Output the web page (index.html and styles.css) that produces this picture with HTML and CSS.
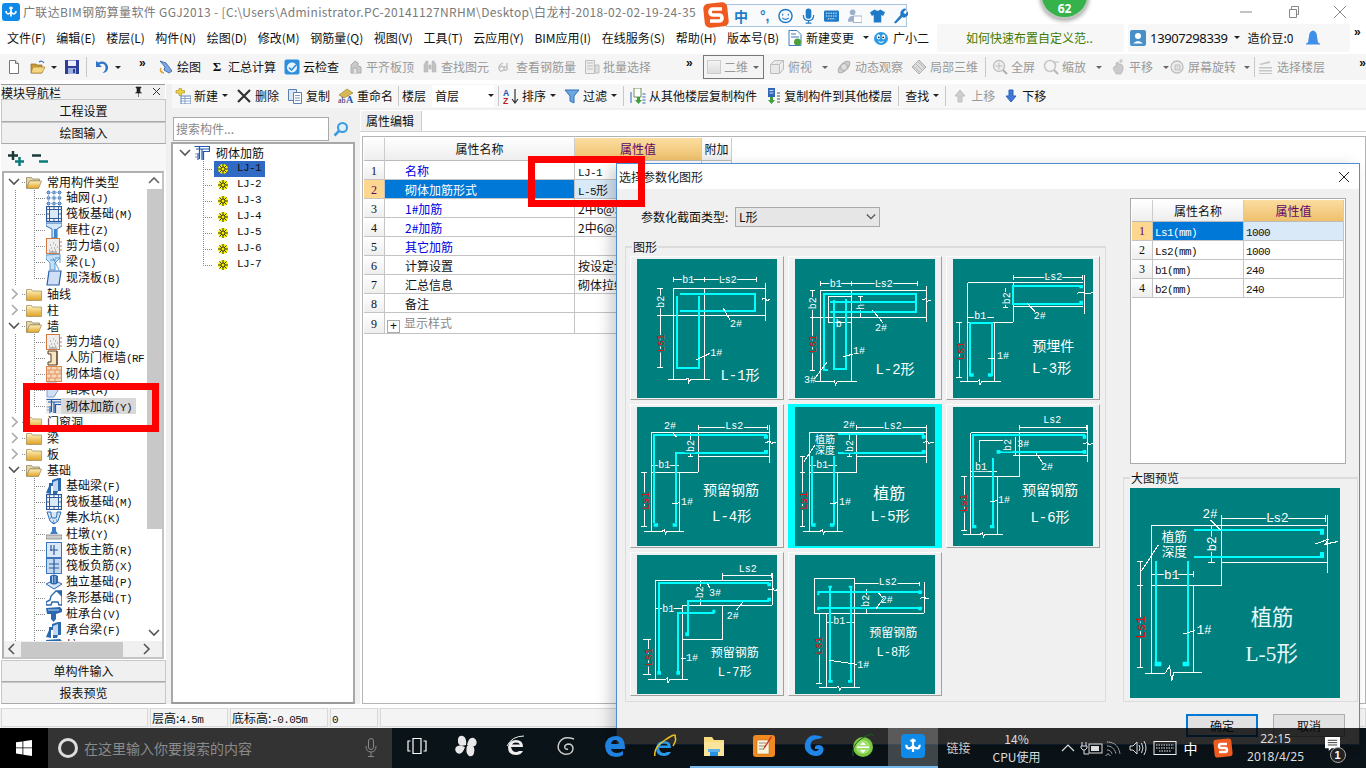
FILE: index.html
```html
<!DOCTYPE html>
<html lang="zh-CN">
<head>
<meta charset="utf-8">
<title>广联达BIM钢筋算量软件 GGJ2013</title>
<link rel="stylesheet" href="styles.css">
</head>
<body>
<svg class="defs" aria-hidden="true">
  <defs>
    <linearGradient id="gold" x1="0" y1="0" x2="0" y2="1"><stop offset="0" stop-color="#fff3c0"/><stop offset="1" stop-color="#e0a020"/></linearGradient>
    <symbol id="i-new" viewBox="0 0 16 16"><path d="M3.500 1.500h6l3 3v10h-9z" fill="#fff" stroke="#777"/><path d="M9.500 1.500v3h3" fill="#ddd" stroke="#777"/></symbol>
    <symbol id="i-open" viewBox="0 0 16 16"><path d="M1 5h5l1 1h5v8H1z" fill="#c99b3a" stroke="#8a6a20" stroke-width=".7"/><path d="M3 8h12l-3 6H1z" fill="#f5d680" stroke="#a88430" stroke-width=".7"/><path d="M9 3q3-2 5 1" fill="none" stroke="#3a70c0" stroke-width="1.200"/></symbol>
    <symbol id="i-save" viewBox="0 0 16 16"><rect x="1" y="1" width="14" height="14" fill="#2b3f9a"/><rect x="4" y="1.500" width="8" height="5.500" fill="#eef"/><rect x="4" y="9" width="8" height="6" fill="#9db0dd"/><rect x="9" y="10" width="2" height="4" fill="#2b3f9a"/></symbol>
    <symbol id="i-undo" viewBox="0 0 16 16"><path d="M2 2v6h6L5.500 5.500C8 4 11 5 11.500 8c.4 2.500-1 4.500-3 6 4 0 6-3 5.500-6.500C13 3 8 1 4.500 3.500z" fill="#2f74c8"/></symbol>
    <symbol id="i-pen" viewBox="0 0 16 16"><path d="M2 2l5 6-1 3 5 3 3-2-6-8z" fill="#7fa8e0" stroke="#2f5fa8" stroke-width=".8"/><path d="M3 9q-2 4 3 5" fill="none" stroke="#e0a030" stroke-width="1.500"/></symbol>
    <symbol id="i-cloud" viewBox="0 0 16 16"><rect x="0.500" y="0.500" width="15" height="15" rx="2" fill="#2d8fdc"/><circle cx="8" cy="8.500" r="5" fill="#eaf4fd"/><path d="M5 8.500l2.500 2.500L12 6" fill="none" stroke="#2d8fdc" stroke-width="1.600"/></symbol>
    <symbol id="i-gbox" viewBox="0 0 16 16"><path d="M4 14V6l4-4 3 2v3l3 1v6z" fill="#c8c8c8" stroke="#aaa"/><path d="M6 14V9h4v5" fill="#e4e4e4" stroke="#aaa"/></symbol>
    <symbol id="i-bino" viewBox="0 0 16 16"><path d="M2 13V6l2-4h2v11zM10 13V2h2l2 4v7zM7 6h2v4H7z" fill="#c0c0c0" stroke="#aaa" stroke-width=".5"/></symbol>
    <symbol id="i-6d" viewBox="0 0 16 16"><path d="M6 4Q1 6 2 10q1 3 4 1.500T5 7L2 9M10 4v7m0-3q-3-1-3 1.500T10 11" fill="none" stroke="#bbb" stroke-width="1.300"/></symbol>
    <symbol id="i-list" viewBox="0 0 16 16"><path d="M1.500 1.500h9v13h-9z" fill="#eee" stroke="#bbb"/><path d="M3 4h6M3 7h6M3 10h6M11 6h4v8h-4z" fill="#ddd" stroke="#bbb"/></symbol>
    <symbol id="i-cube" viewBox="0 0 16 16"><path d="M1.500 5.500h9v9h-9zM1.500 5.500l4-4h9l-4 4M10.500 14.500l4-4v-9" fill="#e8e8e8" stroke="#bbb"/></symbol>
    <symbol id="i-orbit" viewBox="0 0 16 16"><ellipse cx="8" cy="8" rx="7.500" ry="3.500" transform="rotate(-45 8 8)" fill="#ccc" stroke="#aaa"/><circle cx="8" cy="8" r="3.500" fill="#ddd" stroke="#aaa"/></symbol>
    <symbol id="i-local3d" viewBox="0 0 16 16"><path d="M8 1l7 7-7 7-7-7z" fill="#ddd" stroke="#aaa"/><path d="M4.500 4.500l7 7M7 2.500l6.500 6.500M2.500 7L9 13.500" fill="none" stroke="#aaa"/></symbol>
    <symbol id="i-mag" viewBox="0 0 16 16"><circle cx="7" cy="7" r="5.500" fill="#eee" stroke="#bbb" stroke-width="1.300"/><path d="M7 3.500v7M3.500 7h7" stroke="#bbb"/><path d="M11 11l4 4" stroke="#aaa" stroke-width="2"/></symbol>
    <symbol id="i-zoom" viewBox="0 0 16 16"><circle cx="7" cy="7" r="5.500" fill="#f4f4f4" stroke="#c4c4c4" stroke-width="1.500"/><path d="M11 11l4 4" stroke="#b4b4b4" stroke-width="2"/><path d="M12 2v3M13 3h3" stroke="#bbb"/></symbol>
    <symbol id="i-pan" viewBox="0 0 16 16"><path d="M3 9l2-2 1 1V4l2-1 1 2 2 0 2 2v4l-2 4H6z" fill="#c8c8c8" stroke="#aaa" stroke-width=".6"/><path d="M11 0v4M9 2h4" stroke="#bbb"/></symbol>
    <symbol id="i-rot" viewBox="0 0 16 16"><rect x="2" y="2" width="12" height="12" rx="6" fill="#eee" stroke="#bbb" stroke-width="1.300"/><path d="M6 6h5v5H6z" fill="#ddd" stroke="#bbb"/></symbol>
    <symbol id="i-layers" viewBox="0 0 16 16"><path d="M1 5l11-3v2L3 6zM1 8h13v1.500H1zM1 11h13v1.500H1zM1 14h13v1H1z" fill="#c4c4c4"/></symbol>
    <symbol id="i-addtbl" viewBox="0 0 16 16"><rect x="6" y="8" width="10" height="8" fill="#fff" stroke="#5a84b8"/><path d="M6 10.500h10M6 13h10M10 8v8" stroke="#5a84b8" stroke-width=".7"/><path d="M1 2.500h3v-2h2.500v2h3v2.500h-3v2.500H4V5H1z" fill="#f2d43a" stroke="#a08a20" stroke-width=".6"/></symbol>
    <symbol id="i-x" viewBox="0 0 16 16"><path d="M2 2l12 12M14 2L2 14" stroke="#333" stroke-width="2.200"/></symbol>
    <symbol id="i-copy" viewBox="0 0 16 16"><path d="M1.500 1.500h8v11h-8z" fill="#dbe6f6" stroke="#5a7fb0"/><path d="M6.500 4.500h8v11h-8z" fill="#fff" stroke="#5a7fb0"/><path d="M8 7.500h5M8 10h5M8 12.500h5" stroke="#5a7fb0" stroke-width=".8"/></symbol>
    <symbol id="i-rename" viewBox="0 0 16 16"><path d="M1 7l8-6 6 4-9 5z" fill="#d8b850" stroke="#8a7a30" stroke-width=".6"/><text class="ic-txt" x="0" y="15">ab</text><text class="ic-txt big" x="8" y="15">A</text></symbol>
    <symbol id="i-sort" viewBox="0 0 16 16"><text class="ic-sort blue" x="0" y="7.500">A</text><text class="ic-sort red" x="0" y="15.500">Z</text><path d="M12 1v13M9 11l3 4 3-4" fill="none" stroke="#333" stroke-width="1.200"/></symbol>
    <symbol id="i-filter" viewBox="0 0 16 16"><path d="M1 2h14L10 8v7L6 13V8z" fill="#6ea6e0" stroke="#2f6fb8"/></symbol>
    <symbol id="i-cpfrom" viewBox="0 0 16 16"><path d="M4 0h7v9H4z" fill="#fff" stroke="#4a7a30" stroke-width=".8"/><path d="M7 9h3v3h2l-3.500 4L5 12h2z" fill="#3da03d"/><path d="M12.500 6h3M12.500 9h3M12.500 12h3M12.500 15h3" stroke="#2f66b8" stroke-width="1.200"/><path d="M1 4v11" stroke="#2f66b8"/></symbol>
    <symbol id="i-cpto" viewBox="0 0 16 16"><path d="M3 0h7v9H3z" fill="#2f66b8"/><path d="M4.500 2.500h4M4.500 5h4" stroke="#fff" stroke-width=".8"/><path d="M5 9h3v3h2l-3.500 4L3 12h2z" fill="#3da03d"/><path d="M12 5h3M12 8h3M12 11h3M12 14h3" stroke="#555" stroke-width="1.200"/></symbol>
    <symbol id="i-up" viewBox="0 0 16 16"><path d="M8 2l5 6h-3v6H6V8H3z" fill="#ccc" stroke="#bbb"/></symbol>
    <symbol id="i-down" viewBox="0 0 16 16"><path d="M8 14l5-6h-3V2H6v6H3z" fill="#3f78d8" stroke="#2f5fb8"/></symbol>
    <symbol id="i-change" viewBox="0 0 16 16"><path d="M2 .5h8l4 4v11H2z" fill="#fff" stroke="#3c7cc0"/><path d="M4 4h5M4 7h8" stroke="#3c7cc0"/><circle cx="10.500" cy="12" r="3.500" fill="#4aa03a"/></symbol>
    <symbol id="i-bot" viewBox="0 0 16 16"><ellipse cx="8" cy="8.500" rx="7" ry="6.500" fill="#2a9be8"/><ellipse cx="5.500" cy="7" rx="1.800" ry="2.400" fill="#fff"/><ellipse cx="10.500" cy="7" rx="1.800" ry="2.400" fill="#fff"/><circle cx="5.800" cy="7.300" r=".9" fill="#123"/><circle cx="10.200" cy="7.300" r=".9" fill="#123"/><path d="M5.500 11.500q2.500 2 5 0" stroke="#fff" fill="none"/></symbol>
    <symbol id="i-user" viewBox="0 0 16 16"><rect width="16" height="16" rx="2" fill="#4a90c8"/><circle cx="8" cy="6" r="3" fill="#fff"/><path d="M3 13.500q5-5 10 0z" fill="#fff"/></symbol>
    <symbol id="i-bell" viewBox="0 0 16 16"><path d="M8 .5q4 1 4 6l1 6 2 1v1H1v-1l2-1 1-6q0-5 4-6z" fill="#3f8fe8"/></symbol>
    <symbol id="i-folder" viewBox="0 0 16 16"><path d="M.5 3.500h5l1 1.500h9v9.500H.5z" fill="url(#gold)" stroke="#9a8a5a" stroke-width=".7"/></symbol>
    <symbol id="i-folderopen" viewBox="0 0 16 16"><path d="M.5 3.500h5l1 1.500h7v2H4L.5 14z" fill="#e4d6a8" stroke="#8a7a50" stroke-width=".7"/><path d="M3.500 7h12l-3 7.500H.5z" fill="url(#gold)" stroke="#9a8a5a" stroke-width=".7"/></symbol>
    <symbol id="i-grid" viewBox="0 0 16 16"><path d="M1 1h3v3H1zM6.500 1h3v3h-3zM12 1h3v3h-3zM1 6.500h3v3H1zM6.500 6.500h3v3h-3zM12 6.500h3v3h-3zM1 12h3v3H1zM6.500 12h3v3h-3zM12 12h3v3h-3z" fill="#4a7ec0"/><path d="M2.500 0v16M8 0v16M13.500 0v16M0 2.500h16M0 8h16M0 13.500h16" stroke="#86a8d8" stroke-width=".8"/></symbol>
    <symbol id="i-raft" viewBox="0 0 16 16"><rect x="0.500" y=".5" width="15" height="15" fill="#fff" stroke="#2a5a9a" stroke-width="1.300"/><rect x="3.500" y="3.500" width="9" height="9" fill="#dbe8f8" stroke="#2a5a9a"/><path d="M0 3.500h16M0 12.500h16M3.500 0v16M12.500 0v16M8 0v3M8 13v3M0 8h3M13 8h3" stroke="#2a5a9a" stroke-width=".9"/></symbol>
    <symbol id="i-col" viewBox="0 0 16 16"><path d="M0 1h16v3l-5 3v9H6V7L0 4z" fill="#d4e6f8" stroke="#2f6fb8"/><path d="M8 7h3v9H8z" fill="#3f86d0"/></symbol>
    <symbol id="i-wall" viewBox="0 0 16 16"><rect x=".5" y=".5" width="13" height="15" fill="#eee" stroke="#d07840"/><path d="M3 12h1M6 13h1M9 12h1M5 10h1M8 10h1M11 9h1M4 7h1M9 7h1M7 5h1M3 14h8" stroke="#888"/><path d="M14 4h2M14 8h2M14 12h2" stroke="#d07840"/></symbol>
    <symbol id="i-beam" viewBox="0 0 16 16"><path d="M0 1l14-1v4L9 9v7H4V9L0 5z" fill="#c6e0f6" stroke="#3a86c8" stroke-width=".8"/><path d="M4 6h6M7 4l6 12M9 4h5v5" fill="none" stroke="#3a86c8" stroke-width=".8"/></symbol>
    <symbol id="i-slab" viewBox="0 0 16 16"><path d="M3 1h12l-2 14H1z" fill="#cfe0f6" stroke="#2660b0" stroke-width="1.200"/></symbol>
    <symbol id="i-door" viewBox="0 0 16 16"><path d="M2 1h9v14H2v-3h3V4H2z" fill="#f6e6c8" stroke="#5a3a18"/><path d="M11 1v14" stroke="#5a3a18"/></symbol>
    <symbol id="i-brick" viewBox="0 0 16 16"><rect x=".5" y=".5" width="15" height="15" fill="#f8d8b8" stroke="#d88850"/><path d="M0 4h16M0 8h16M0 12h16M5 0v4M11 0v4M3 4v4M9 4v4M14 4v4M5 8v4M11 8v4M3 12v4M9 12v4" stroke="#d88850" stroke-width=".8"/></symbol>
    <symbol id="i-hbeam" viewBox="0 0 16 16"><path d="M1 1h10l3 4-6 10H1z" fill="#cfe0f6" stroke="#7aa0d0"/></symbol>
    <symbol id="i-rebar" viewBox="0 0 16 16"><path d="M.5 1.500h15v5h-6V15M2 4h13M5.500 1v13M4 8v7M8 4v11" fill="none" stroke="#1f58b0" stroke-width="1.200"/><path d="M1 9h4M1 12h4" stroke="#7a9ad0"/></symbol>
    <symbol id="i-fbeam" viewBox="0 0 16 16"><path d="M0 15l3-7V5h3V2l6-2h3v13h-3l-1 3H7V8H5v8z" fill="#2a68b0"/><path d="M7 4l5-2v11H7zM4 9v5" fill="#c0d8f4"/></symbol>
    <symbol id="i-pit" viewBox="0 0 16 16"><path d="M1 2h4v3l1 3h4l1-3V2h4M1 2l3 9 4 3 4-3 3-9" fill="#d4e6f8" stroke="#2f6fb8"/><path d="M4 8h1M7 11h1M10 10h1M6 13h3" stroke="#2f6fb8"/></symbol>
    <symbol id="i-pier" viewBox="0 0 16 16"><path d="M6 1h4v4l2 3H4l2-3z" fill="#3f7ec8"/><rect x="0" y="9" width="16" height="4" fill="#ccc" stroke="#777" stroke-width=".7"/></symbol>
    <symbol id="i-main" viewBox="0 0 16 16"><rect x=".5" y=".5" width="15" height="15" fill="#dbe8f8" stroke="#3a76c0"/><path d="M4 8h8M8 3v10M5 3v6" fill="none" stroke="#2a5aa0" stroke-width="1.200"/></symbol>
    <symbol id="i-neg" viewBox="0 0 16 16"><rect x=".5" y=".5" width="15" height="15" fill="#c4d8f0" stroke="#3a76c0"/><path d="M3 6h10M3 10h10M8 1v14" stroke="#2a5aa0" stroke-width="1.200"/></symbol>
    <symbol id="i-ind" viewBox="0 0 16 16"><path d="M0 10l8-4 8 4-8 5z" fill="#d4e6f8" stroke="#2a68b0"/><path d="M4 2q4-3 8 0v7q-4 3-8 0z" fill="#2a68b0"/><path d="M6.500 2v7M9 2v7" stroke="#a8c8ee"/></symbol>
    <symbol id="i-strip" viewBox="0 0 16 16"><path d="M0 15v-3l4-2 1-4 5-5h6v14h-3l-1-3H6l-1 3z" fill="#fff" stroke="#2a68b0" stroke-width="1.400"/><path d="M10 1h6v6z" fill="#2a68b0"/></symbol>
    <symbol id="i-cap" viewBox="0 0 16 16"><path d="M0 2l14-1 2 2v3L10 8H1z" fill="#2a68b0"/><path d="M2 4h11" stroke="#c0d8f4"/><path d="M5 8h5v5l-2.500 3L5 13z" fill="#2a68b0"/></symbol>
    <symbol id="i-lj" viewBox="0 0 12 12"><circle cx="6" cy="6" r="5" fill="#f8f000"/><path d="M1 6h10M6 1v10M2.500 2.500l7 7M9.500 2.500l-7 7" stroke="#202020" stroke-width=".9"/><circle cx="6" cy="6" r="2" fill="#f8f000" stroke="#202020" stroke-width=".8"/></symbol>
    <symbol id="chev-d" viewBox="0 0 12 12"><path d="M1 3l5 5 5-5" fill="none" stroke="#555" stroke-width="1.600"/></symbol>
    <symbol id="chev-r" viewBox="0 0 12 12"><path d="M4 1l5 5-5 5" fill="none" stroke="#aaa" stroke-width="1.600"/></symbol>
    <symbol id="chev-u" viewBox="0 0 12 12"><path d="M1 8l5-5 5 5" fill="none" stroke="#666" stroke-width="1.600"/></symbol>
    <symbol id="chev-l" viewBox="0 0 12 12"><path d="M8 1L3 6l5 5" fill="none" stroke="#555" stroke-width="1.600"/></symbol>
    <symbol id="chev-rd" viewBox="0 0 12 12"><path d="M4 1l5 5-5 5" fill="none" stroke="#555" stroke-width="1.600"/></symbol>
    <symbol id="i-logo" viewBox="0 0 18 18"><rect width="18" height="18" rx="3" fill="#0f8ae8"/><path d="M9 3.500v10M4 8c0 3 2.500 4 5 1 2.500 3 5 2 5-1M7 5h4" fill="none" stroke="#fff" stroke-width="1.700"/></symbol>
  </defs>
</svg>

<div class="screen">
  <div class="app">
    <header class="titlebar">
      <svg class="logo"><use href="#i-logo"/></svg>
      <span class="title-text">广联达BIM钢筋算量软件 GGJ2013 - [C:\Users\Administrator.PC-20141127NRHM\Desktop\白龙村-2018-02-02-19-24-35</span>
      <div class="winctl">
        <svg class="wc"><path d="M2 8h12" stroke="#888"/></svg>
        <svg class="wc"><path d="M4.500 5.500h7v8h-7zM6.500 5.500v-3h7v8h-2" fill="none" stroke="#888"/></svg>
        <svg class="wc"><path d="M2 2l12 12M14 2L2 14" stroke="#888"/></svg>
      </div>
    </header>

    <nav class="menubar">
      <div class="menu-list">
        <span>文件(F)</span><span>编辑(E)</span><span>楼层(L)</span><span>构件(N)</span><span>绘图(D)</span><span>修改(M)</span><span>钢筋量(Q)</span><span>视图(V)</span><span>工具(T)</span><span>云应用(Y)</span><span>BIM应用(I)</span><span>在线服务(S)</span><span>帮助(H)</span><span>版本号(B)</span>
      </div>
      <div class="menu-tools">
        <span class="tb-item"><svg class="ic"><use href="#i-change"/></svg><span>新建变更</span><i class="caret"></i></span>
        <span class="tb-item bot"><svg class="ic"><use href="#i-bot"/></svg><span>广小二</span></span>
      </div>
      <div class="hint">如何快速布置自定义范..</div>
      <div class="account">
        <svg class="ic"><use href="#i-user"/></svg><span class="phone">13907298339</span><i class="caret"></i><span class="beans">造价豆:0</span><svg class="ic bell"><use href="#i-bell"/></svg>
      </div>
      <span class="more">»</span>
    </nav>

    <div class="toolbar1">
      <div class="tb-group g1">
        <svg class="ic"><use href="#i-new"/></svg>
        <svg class="ic sp"><use href="#i-open"/></svg><i class="caret"></i>
        <svg class="ic sp2"><use href="#i-save"/></svg>
        <span class="sep sep-a"></span>
        <svg class="ic"><use href="#i-undo"/></svg><i class="caret"></i>
        <span class="more-in">»</span>
      </div>
      <div class="tb-group g2">
        <span class="tb-item"><svg class="ic"><use href="#i-pen"/></svg>绘图</span>
        <span class="tb-item"><span class="sigma">Σ</span>汇总计算</span>
        <span class="tb-item"><svg class="ic"><use href="#i-cloud"/></svg>云检查</span>
        <span class="tb-item off"><svg class="ic"><use href="#i-gbox"/></svg>平齐板顶</span>
        <span class="tb-item off"><svg class="ic"><use href="#i-bino"/></svg>查找图元</span>
        <span class="tb-item off"><svg class="ic"><use href="#i-6d"/></svg>查看钢筋量</span>
        <span class="tb-item off"><svg class="ic"><use href="#i-list"/></svg>批量选择</span>
      </div>
      <span class="more-in mid">»</span>
      <div class="tb-group g3">
        <div class="mode"><span class="mode-sq"></span><span>二维</span><i class="caret"></i></div>
        <span class="tb-item off"><svg class="ic"><use href="#i-cube"/></svg>俯视<i class="caret"></i></span>
        <span class="tb-item off"><svg class="ic"><use href="#i-orbit"/></svg>动态观察</span>
        <span class="tb-item off"><svg class="ic"><use href="#i-local3d"/></svg>局部三维</span>
        <span class="sep sep-wide"></span>
        <span class="tb-item off"><svg class="ic"><use href="#i-mag"/></svg>全屏</span>
        <span class="tb-item off"><svg class="ic"><use href="#i-zoom"/></svg>缩放<i class="caret"></i></span>
        <span class="tb-item off"><svg class="ic"><use href="#i-pan"/></svg>平移<i class="caret"></i></span>
        <span class="tb-item off tight"><svg class="ic"><use href="#i-rot"/></svg>屏幕旋转<i class="caret"></i></span>
        <span class="sep sep-narrow"></span>
        <span class="tb-item off"><svg class="ic"><use href="#i-layers"/></svg>选择楼层</span>
      </div>
      <span class="more-in end">»</span>
    </div>

    <div class="workspace">
      <aside class="nav">
        <div class="nav-head"><span>模块导航栏</span><span class="nav-pin">
          <svg class="mini"><path d="M3 1h5v1H7v4l1.500 1h-6L4 6V2H3zM5.500 7v4" fill="#222" stroke="#222" stroke-width=".6"/></svg>
          <svg class="mini"><path d="M2 2l7 7M9 2L2 9" stroke="#333"/></svg></span></div>
        <button class="nav-btn">工程设置</button>
        <button class="nav-btn">绘图输入</button>
        <div class="nav-tools">
          <svg class="tool-ic"><path d="M0 4.500h10M5 0v9" stroke="#1d3a3a" stroke-width="2.500"/><path d="M7 10.500h9M11.500 6v9" stroke="#0a7a7a" stroke-width="2.500"/></svg>
          <svg class="tool-ic"><path d="M0 4.500h9" stroke="#1d3a3a" stroke-width="2.500"/><path d="M7 10.500h9" stroke="#0a7a7a" stroke-width="2.500"/></svg>
        </div>
        <div class="tree-box">
          <div class="tree-top">
            <div class="tree">
              <div class="row group"><svg class="chev"><use href="#chev-d"/></svg><svg class="ic"><use href="#i-folderopen"/></svg><span>常用构件类型</span></div>
              <div class="row leaf"><svg class="ic"><use href="#i-grid"/></svg><span>轴网<b>(J)</b></span></div>
              <div class="row leaf"><svg class="ic"><use href="#i-raft"/></svg><span>筏板基础<b>(M)</b></span></div>
              <div class="row leaf"><svg class="ic"><use href="#i-col"/></svg><span>框柱<b>(Z)</b></span></div>
              <div class="row leaf"><svg class="ic"><use href="#i-wall"/></svg><span>剪力墙<b>(Q)</b></span></div>
              <div class="row leaf"><svg class="ic"><use href="#i-beam"/></svg><span>梁<b>(L)</b></span></div>
              <div class="row leaf end"><svg class="ic"><use href="#i-slab"/></svg><span>现浇板<b>(B)</b></span></div>
              <div class="row group"><svg class="chev"><use href="#chev-r"/></svg><svg class="ic"><use href="#i-folder"/></svg><span>轴线</span></div>
              <div class="row group"><svg class="chev"><use href="#chev-r"/></svg><svg class="ic"><use href="#i-folder"/></svg><span>柱</span></div>
              <div class="row group"><svg class="chev"><use href="#chev-d"/></svg><svg class="ic"><use href="#i-folderopen"/></svg><span>墙</span></div>
              <div class="row leaf"><svg class="ic"><use href="#i-wall"/></svg><span>剪力墙<b>(Q)</b></span></div>
              <div class="row leaf"><svg class="ic"><use href="#i-door"/></svg><span>人防门框墙<b>(RF</b></span></div>
              <div class="row leaf"><svg class="ic"><use href="#i-brick"/></svg><span>砌体墙<b>(Q)</b></span></div>
              <div class="row leaf"><svg class="ic"><use href="#i-hbeam"/></svg><span>暗梁<b>(A)</b></span></div>
              <div class="row leaf end on"><svg class="ic"><use href="#i-rebar"/></svg><span class="on-label">砌体加筋<b>(Y)</b></span></div>
              <div class="row group"><svg class="chev"><use href="#chev-r"/></svg><svg class="ic"><use href="#i-folder"/></svg><span>门窗洞</span></div>
              <div class="row group"><svg class="chev"><use href="#chev-r"/></svg><svg class="ic"><use href="#i-folder"/></svg><span>梁</span></div>
              <div class="row group"><svg class="chev"><use href="#chev-r"/></svg><svg class="ic"><use href="#i-folder"/></svg><span>板</span></div>
              <div class="row group"><svg class="chev"><use href="#chev-d"/></svg><svg class="ic"><use href="#i-folderopen"/></svg><span>基础</span></div>
              <div class="row leaf"><svg class="ic"><use href="#i-fbeam"/></svg><span>基础梁<b>(F)</b></span></div>
              <div class="row leaf"><svg class="ic"><use href="#i-raft"/></svg><span>筏板基础<b>(M)</b></span></div>
              <div class="row leaf"><svg class="ic"><use href="#i-pit"/></svg><span>集水坑<b>(K)</b></span></div>
              <div class="row leaf"><svg class="ic"><use href="#i-pier"/></svg><span>柱墩<b>(Y)</b></span></div>
              <div class="row leaf"><svg class="ic"><use href="#i-main"/></svg><span>筏板主筋<b>(R)</b></span></div>
              <div class="row leaf"><svg class="ic"><use href="#i-neg"/></svg><span>筏板负筋<b>(X)</b></span></div>
              <div class="row leaf"><svg class="ic"><use href="#i-ind"/></svg><span>独立基础<b>(P)</b></span></div>
              <div class="row leaf"><svg class="ic"><use href="#i-strip"/></svg><span>条形基础<b>(T)</b></span></div>
              <div class="row leaf"><svg class="ic"><use href="#i-cap"/></svg><span>桩承台<b>(V)</b></span></div>
              <div class="row leaf"><svg class="ic"><use href="#i-fbeam"/></svg><span>承台梁<b>(F)</b></span></div>
              <div class="row leaf"><svg class="ic"><use href="#i-cap"/></svg><span>桩<b>(U)</b></span></div>
            </div>
            <div class="vscroll">
              <svg class="sb-arrow"><use href="#chev-u"/></svg>
              <div class="vthumb"></div>
              <div class="vrest"></div>
              <svg class="sb-arrow"><use href="#chev-d"/></svg>
            </div>
          </div>
          <div class="hscroll">
            <svg class="sb-arrow"><use href="#chev-l"/></svg>
            <div class="hthumb"></div>
            <div class="hrest"></div>
            <svg class="sb-arrow"><use href="#chev-rd"/></svg>
          </div>
        </div>
        <button class="nav-btn">单构件输入</button>
        <button class="nav-btn">报表预览</button>
      </aside>

      <div class="right">
        <div class="toolbar2">
          <span class="tb-item"><svg class="ic"><use href="#i-addtbl"/></svg>新建<i class="caret"></i></span>
          <span class="tb-item"><svg class="ic"><use href="#i-x"/></svg>删除</span>
          <span class="tb-item"><svg class="ic"><use href="#i-copy"/></svg>复制</span>
          <span class="tb-item"><svg class="ic"><use href="#i-rename"/></svg>重命名</span>
          <span class="sep"></span>
          <span class="floor-label">楼层</span>
          <div class="floor-combo"><span>首层</span><i class="caret"></i></div>
          <span class="sep sep-narrow2"></span>
          <span class="tb-item"><svg class="ic"><use href="#i-sort"/></svg>排序<i class="caret"></i></span>
          <span class="tb-item"><svg class="ic"><use href="#i-filter"/></svg>过滤<i class="caret"></i></span>
          <span class="sep sep-plus"></span>
          <span class="tb-item"><svg class="ic"><use href="#i-cpfrom"/></svg>从其他楼层复制构件</span>
          <span class="tb-item"><svg class="ic"><use href="#i-cpto"/></svg>复制构件到其他楼层</span>
          <span class="sep sep-plus"></span>
          <span class="tb-item">查找<i class="caret"></i></span>
          <span class="sep sep-plus"></span>
          <span class="tb-item off"><svg class="ic"><use href="#i-up"/></svg>上移</span>
          <span class="tb-item"><svg class="ic"><use href="#i-down"/></svg>下移</span>
        </div>
        <div class="panes">
          <section class="comp">
            <div class="search"><div class="search-input">搜索构件...</div>
              <svg class="search-ic" viewBox="0 0 16 16"><circle cx="9.500" cy="6.500" r="4.500" fill="#dff0fb" stroke="#3a9ade" stroke-width="2"/><path d="M6 10l-4.500 4.500" stroke="#3a9ade" stroke-width="2.500"/></svg></div>
            <div class="comp-tree">
              <div class="row ctop"><svg class="chev"><use href="#chev-d"/></svg><svg class="ic"><use href="#i-rebar"/></svg><span>砌体加筋</span></div>
              <div class="row cleaf"><span class="c-on"><svg class="ic-lj"><use href="#i-lj"/></svg><b>LJ-1</b></span></div>
              <div class="row cleaf"><span class="c-it"><svg class="ic-lj"><use href="#i-lj"/></svg><b>LJ-2</b></span></div>
              <div class="row cleaf"><span class="c-it"><svg class="ic-lj"><use href="#i-lj"/></svg><b>LJ-3</b></span></div>
              <div class="row cleaf"><span class="c-it"><svg class="ic-lj"><use href="#i-lj"/></svg><b>LJ-4</b></span></div>
              <div class="row cleaf"><span class="c-it"><svg class="ic-lj"><use href="#i-lj"/></svg><b>LJ-5</b></span></div>
              <div class="row cleaf"><span class="c-it"><svg class="ic-lj"><use href="#i-lj"/></svg><b>LJ-6</b></span></div>
              <div class="row cleaf end"><span class="c-it"><svg class="ic-lj"><use href="#i-lj"/></svg><b>LJ-7</b></span></div>
            </div>
          </section>
          <section class="props">
            <div class="tabs"><span class="tab">属性编辑</span></div>
            <div class="prop-box">
              <table class="grid prop-grid">
                <colgroup><col class="c-num"><col class="c-name"><col class="c-val"><col class="c-add"></colgroup>
                <tr class="hd"><th></th><th>属性名称</th><th class="hv">属性值</th><th>附加</th></tr>
                <tr><td class="n">1</td><td class="k link">名称</td><td class="v"><b>LJ-1</b></td><td></td></tr>
                <tr class="sel"><td class="n">2</td><td class="k">砌体加筋形式</td><td class="v"><b>L-5</b>形</td><td></td></tr>
                <tr><td class="n">3</td><td class="k link">1#加筋</td><td class="v">2中6@500</td><td></td></tr>
                <tr><td class="n">4</td><td class="k link">2#加筋</td><td class="v">2中6@500</td><td></td></tr>
                <tr><td class="n">5</td><td class="k link">其它加筋</td><td class="v"></td><td></td></tr>
                <tr><td class="n">6</td><td class="k">计算设置</td><td class="v">按设定计算</td><td></td></tr>
                <tr><td class="n">7</td><td class="k">汇总信息</td><td class="v">砌体拉结筋</td><td></td></tr>
                <tr><td class="n">8</td><td class="k">备注</td><td class="v"></td><td></td></tr>
                <tr><td class="n">9</td><td class="k mute"><i class="plus">+</i>显示样式</td><td class="v"></td><td></td></tr>
              </table>
            </div>
          </section>
        </div>
      </div>
    </div>

    <footer class="status">
      <span class="st s1"></span><span class="st s2">层高:<b>4.5m</b></span><span class="st s3">底标高:<b>-0.05m</b></span><span class="st s4"><b>0</b></span><span class="st s5"></span>
    </footer>
  </div>

  <div class="green-ball">62</div>

  <div class="sogou">
    <svg class="s-logo" viewBox="0 0 26 26"><rect x="1" y="1" width="24" height="24" rx="5" transform="rotate(-6 13 13)" fill="#ee5a20"/><path d="M19 7H10Q7 7 7 10t3 3h6q3 0 3 3t-3 3H7" fill="none" stroke="#fff" stroke-width="3.600"/></svg>
    <div class="s-bar">
      <span class="s-zh">中</span>
      <span class="s-dot">°,</span>
      <svg class="s-ic" viewBox="0 0 16 16"><circle cx="8" cy="8" r="7" fill="none" stroke="#1f7ac8" stroke-width="1.500"/><path d="M5 5.500v2M11 5.500v2M4.500 10q3.500 3 7 0" fill="none" stroke="#1f7ac8" stroke-width="1.300"/></svg>
      <svg class="s-ic" viewBox="0 0 16 16"><rect x="5" y="0" width="6" height="11" rx="3" fill="#1f7ac8"/><path d="M2.500 7q0 6 5.500 6t5.500-6M8 13v2M5 15.500h6" fill="none" stroke="#1f7ac8" stroke-width="1.300"/></svg>
      <svg class="s-ic" viewBox="0 0 16 16"><rect x="0" y="2" width="16" height="12" rx="1.500" fill="#1f7ac8"/><path d="M2 5h12M2 8h12M4 11h8" stroke="#fff" stroke-dasharray="1.500 1"/></svg>
      <svg class="s-ic" viewBox="0 0 16 16"><circle cx="6" cy="4" r="3" fill="#9ab0c8"/><path d="M1 14q0-6 5-6h4v6z" fill="#9ab0c8"/><rect x="7" y="8" width="9" height="7" fill="#fff" stroke="#9ab0c8"/></svg>
      <svg class="s-ic" viewBox="0 0 16 16"><path d="M5 1L0 4l2 4 2-1v8h8V7l2 1 2-4-5-3q-3 3-6 0z" fill="#1f7ac8"/></svg>
      <svg class="s-ic" viewBox="0 0 16 16"><path d="M1 15l7-8q-1-4 2-6t4 0l-3 3 2 2 3-3q2 2-1 5t-5 1l-7 7z" fill="#1f7ac8"/></svg>
    </div>
  </div>

  <section class="dialog">
    <header class="dlg-title"><span>选择参数化图形</span><svg class="dlg-x"><path d="M1 1l10 10M11 1L1 11" stroke="#222"/></svg></header>
    <div class="dlg-body">
      <div class="dlg-main">
        <div class="dlg-left">
          <div class="type-row"><label>参数化截面类型:</label><div class="type-select"><span>L形</span><svg class="sel-ch"><use href="#chev-d"/></svg></div></div>
          <div class="fset shapes">
            <span class="legend">图形</span>
            <div class="shape-grid">
              <!-- L-1 -->
              <div class="cell"><svg class="thumb" viewBox="51 27 420 417">
                <path class="wl" d="M160 89H410M160 82v14M253 82v14M410 82v14M160 115H436M110 197H436M160 115V388M253 115V388M145 388H198l6-4 2 14 6-10H270M436 100V212M425 148l11-4 4 8 11-4M120 115V353M112 115h16M112 197h16M112 353h16"/>
                <path class="cy" d="M180 131H406V183H180M172 138V353H237V138"/>
                <path class="wl" d="M310 175l20 35M228 330l42-20"/>
                <text class="dt bg" x="205" y="99">b1</text><text class="dt bg" x="323" y="99">Ls2</text>
                <text class="dt bg" transform="translate(131 155) rotate(-90)">b2</text><text class="dt rd bg" transform="translate(131 280) rotate(-90)">Ls1</text>
                <text class="dt" x="348" y="232">2#</text><text class="dt" x="289" y="317">1#</text>
                <text class="lb" x="360" y="389">L-1形</text></svg></div>
              <!-- L-2 -->
              <div class="cell"><svg class="thumb" viewBox="525 27 420 417">
                <path class="wl" d="M601 100H893M601 93v14M693 93v14M893 93v14M601 122H918M572 202H918M601 122V395M693 122V395M585 395H638l6-4 2 14 6-10H712M625 140H693M625 140V218M625 218H693M918 108V217M906 150l11-4 4 8 11-4M578 122V360M570 122h16M570 202h16M570 360h16M722 140V202M714 140h16M714 202h16"/>
                <path class="cy" d="M625 360H612V131H888V187H630M630 155H888M642 150V358H679V148"/>
                <path class="wl" d="M622 335l-37 50M757 180l33 40M670 320l30-8"/>
                <text class="dt bg" x="647" y="110">b1</text><text class="dt bg" x="791" y="110">Ls2</text><text class="dt" x="656" y="231">b</text>
                <text class="dt bg" transform="translate(589 160) rotate(-90)">b2</text><text class="dt rd bg" transform="translate(589 282) rotate(-90)">Ls1</text><text class="dt bg" transform="translate(731 170) rotate(-90)">h</text>
                <text class="dt" x="570" y="398">3#</text><text class="dt" x="783" y="242">2#</text><text class="dt" x="717" y="313">1#</text>
                <text class="lb" x="825" y="372">L-2形</text></svg></div>
              <!-- L-3 -->
              <div class="cell"><svg class="thumb" viewBox="39 207 420 417">
                <path class="wl" d="M220 262H428M220 255v14M428 255v14M83 278H430M83 278V574M83 397H220M220 278V397M220 350H430M432 255V373M410 310l22-4 4 6 22-4M60 574H112l6-4 2 14 6-10H182M163 397V574M57 397V562M49 397h16M49 562h16M83 381H163M197 295V352M189 352h16"/>
                <path class="cy" d="M430 288H220V341H430M100 556H90V400H156V556H146"/>
                <path class="cyf" d="M418 285h11v10h-11zM418 332h11v10h-11zM88 550h13v10H88zM144 550h13v10h-13z"/>
                <path class="wl" d="M262 340l23 25M145 507l18-2"/>
                <text class="dt bg" x="340" y="269">Ls2</text><text class="dt bg" x="121" y="387">b1</text>
                <text class="dt bg" transform="translate(211 325) rotate(-90)">b2</text><text class="dt rd bg" transform="translate(71 483) rotate(-90)">Ls1</text>
                <text class="dt" x="299" y="388">2#</text><text class="dt" x="189" y="508">1#</text>
                <text class="lb" x="340" y="482">预埋件</text><text class="lb" x="335" y="550">L-3形</text></svg></div>
              <!-- L-4 -->
              <div class="cell"><svg class="thumb" viewBox="51 471 420 417">
                <path class="wl" d="M235 532H443M235 525v14M443 525v14M95 547H447M95 547V843M235 547V667M95 667H235M178 667V843M235 619H447M447 525V640M435 578l15-4 4 6 14-4M72 843H128l6-4 2 14 6-10H193M72 667V828M64 667h16M64 828h16M95 645H178M212 547V619M204 619h16"/>
                <path class="cy" d="M103 820V555H440M169 820V610H440"/>
                <path class="cyf" d="M101 820h13v10h-13zM158 820h13v10h-13zM432 555h12v11h-12zM432 600h12v11h-12z"/>
                <path class="wl" d="M160 550l10 12M156 762l24-4"/>
                <text class="dt bg" x="343" y="538">Ls2</text><text class="dt" x="150" y="538">2#</text><text class="dt bg" x="133" y="654">b1</text>
                <text class="dt bg" transform="translate(221 588) rotate(-90)">b2</text><text class="dt rd bg" transform="translate(87 752) rotate(-90)">Ls1</text>
                <text class="dt" x="201" y="764">1#</text>
                <text class="lb" x="333" y="734">预留钢筋</text><text class="lb" x="335" y="814">L-4形</text></svg></div>
              <!-- L-5 -->
              <div class="cell active"><svg class="thumb" viewBox="525 471 420 417">
                <path class="wl" d="M710 532H918M710 525v14M918 525v14M568 547H922M568 547V843M568 667H710M710 547V667M652 667V843M710 619H920M920 525V640M908 578l15-4 4 6 14-4M548 843H602l6-4 2 14 6-10H668M548 619V828M540 619h16M540 667h16M540 828h16M568 645H652M688 547V619M680 619h16"/>
                <path class="cy" d="M655 553H913M655 608H913M576 618V826M641 618V826"/>
                <path class="cyf" d="M905 555h12v11h-12zM905 600h12v11h-12zM574 820h13v10h-13zM630 820h13v10h-13z"/>
                <path class="wl" d="M585 585l-33 50M630 762l22-4"/>
                <text class="dt bg" x="818" y="538">Ls2</text><text class="dt" x="687" y="533">2#</text><text class="dt bg" x="607" y="654">b1</text>
                <text class="dt bg" transform="translate(699 588) rotate(-90)">b2</text><text class="dt rd bg" transform="translate(561 752) rotate(-90)">Ls1</text>
                <text class="dt" x="675" y="764">1#</text><text class="dt" x="615" y="580">植筋</text><text class="dt" x="615" y="612">深度</text>
                <text class="lb lb-big" x="808" y="746">植筋</text><text class="lb" x="810" y="814">L-5形</text></svg></div>
              <!-- L-6 -->
              <div class="cell"><svg class="thumb" viewBox="39 651 420 417">
                <path class="wl" d="M238 713H438M238 706v14M438 706v14M92 728H442M92 728V1032M92 860H238M238 728V860M220 796H442M442 706V815M428 762l15-4 4 6 14-4M70 1032H122l6-4 2 14 6-10H190M172 860V1032M72 860V1020M64 860h16M64 1020h16M92 845H172M226 740V796M118 752H190M118 752V815"/>
                <path class="cy" d="M98 1010V735H435M172 785H435M158 805V1010"/>
                <path class="cyf" d="M428 735h11v11h-11zM428 780h11v11h-11zM170 780h11v11h-11zM96 1005h13v10H96zM150 1005h13v10h-13z"/>
                <path class="wl" d="M288 790l20 28M150 936l20-4"/>
                <text class="dt bg" x="337" y="700">Ls2</text><text class="dt bg" x="123" y="839">b1</text>
                <text class="dt bg" transform="translate(212 765) rotate(-90)">b2</text><text class="dt rd bg" transform="translate(81 940) rotate(-90)">Ls1</text>
                <text class="dt" x="250" y="771">3#</text><text class="dt" x="321" y="841">2#</text><text class="dt" x="192" y="940">1#</text>
                <text class="lb" x="330" y="916">预留钢筋</text><text class="lb" x="330" y="995">L-6形</text></svg></div>
              <!-- L-7 -->
              <div class="cell"><svg class="thumb" viewBox="51 30 420 417">
                <path class="wl" d="M308 91H453M308 84v21M453 84v14M107 106H457M107 106V403M187 180V403M187 180H457M457 85V180M445 135l15-4 4 6 8-3M187 283H308M308 180V283M85 403H136l6-4 2 14 6-10H203M85 283V388M70 283h24M70 388h24M107 190H187M240 106V180"/>
                <path class="cy" d="M117 383V115H447M204 267V167H447M174 383V205H281"/>
                <path class="cyf" d="M112 378h11v11h-11zM169 378h11v11h-11zM196 262h11v11h-11zM277 194h9v11h-9zM442 113h11v11h-11zM442 158h11v11h-11z"/>
                <path class="wl" d="M262 115l8 15M370 170l-20 25M183 342l15-2"/>
                <text class="dt bg" x="383" y="82">Ls2</text><text class="dt bg" x="145" y="200">b1</text>
                <text class="dt bg" transform="translate(249 142) rotate(-90)">b2</text><text class="dt rd bg" transform="translate(97 337) rotate(-90)">Ls1</text>
                <text class="dt" x="285" y="152">3#</text><text class="dt" x="338" y="223">2#</text><text class="dt" x="216" y="347">1#</text>
                <text class="lb lb-s" x="344" y="335">预留钢筋</text><text class="lb lb-s" x="344" y="392">L-7形</text></svg></div>
              <!-- L-8 -->
              <div class="cell"><svg class="thumb" viewBox="525 30 420 417">
                <path class="wl" d="M583 100H703V205H583ZM703 116H898M898 112V124M703 205H913M913 112V205M900 160l15-4 4 6 8-3M619 205V427M703 205V427M597 427H650l6-4 2 14 6-10H720M597 205V415M589 415h16M619 232H703M738 133V205"/>
                <path class="cy" d="M595 141H905M595 190H905M630 122V410M692 122V410"/>
                <path class="cyf" d="M592 138h6v13h-6zM592 185h6v11h-6zM895 136h10v11h-10zM895 185h10v11h-10zM625 122h11v6h-11zM686 122h11v6h-11zM625 405h13v8h-13zM684 405h13v8h-13z"/>
                <path class="wl" d="M775 143l15 17-22 32M628 346l82 12"/>
                <text class="dt bg" x="803" y="121">Ls2</text><text class="dt bg" x="658" y="237">b1</text>
                <text class="dt bg" transform="translate(747 167) rotate(-90)">b2</text><text class="dt rd bg" transform="translate(606 302) rotate(-90)">Ls1</text>
                <text class="dt" x="800" y="175">2#</text><text class="dt" x="730" y="370">1#</text>
                <text class="lb lb-s" x="820" y="277">预留钢筋</text><text class="lb lb-s" x="820" y="334">L-8形</text></svg></div>
            </div>
          </div>
        </div>
        <div class="dlg-right">
          <div class="param-box">
            <table class="grid param-grid">
              <colgroup><col class="p-num"><col class="p-name"><col class="p-val"></colgroup>
              <tr class="hd"><th></th><th>属性名称</th><th class="hv">属性值</th></tr>
              <tr class="sel"><td class="n">1</td><td class="k"><b>Ls1(mm)</b></td><td class="v"><b>1000</b></td></tr>
              <tr><td class="n">2</td><td class="k"><b>Ls2(mm)</b></td><td class="v"><b>1000</b></td></tr>
              <tr><td class="n">3</td><td class="k"><b>b1(mm)</b></td><td class="v"><b>240</b></td></tr>
              <tr><td class="n">4</td><td class="k"><b>b2(mm)</b></td><td class="v"><b>240</b></td></tr>
            </table>
          </div>
          <div class="fset preview">
            <span class="legend">大图预览</span>
            <svg class="big" viewBox="30 24 630 630">
              <path class="wl2" d="M305 115H615M305 105v20M615 105v20M95 136H622M95 136V580M95 316H305M305 105V316M220 316V580M305 247H622M622 105V280M585 192l40-14-8 14 38-8-42 10M75 580H135l14-22 6 46 6-26H245M60 245V562M50 245h20M50 316h20M50 562h20M95 283H220M220 272v20M95 272v20M275 136V247M265 247h20"/>
              <path class="cy2" d="M222 150H610M222 231H610M108 243V555M204 243V555"/>
              <path class="cyf" d="M600 146h12v18h-12zM600 216h12v18h-12zM104 545h20v14h-20zM188 545h20v14h-20z"/>
              <path class="wl2" d="M115 195L65 272M190 462l35-10M272 120l30 30"/>
              <text class="bt bg" x="472" y="127">Ls2</text><text class="bt" x="270" y="113">2#</text>
              <text class="bt" x="163" y="183">植筋</text><text class="bt" x="163" y="228">深度</text>
              <text class="bt bg" x="155" y="298">b1</text><text class="bt" x="252" y="463">1#</text>
              <text class="bt bg" transform="translate(288 192) rotate(-90)">b2</text><text class="bt rd bg" transform="translate(76 442) rotate(-90)">Ls1</text>
              <text class="bl" x="456" y="436">植筋</text><text class="bl" x="455" y="543">L-5形</text>
            </svg>
          </div>
        </div>
      </div>
      <div class="dlg-btns"><button class="btn primary">确定</button><button class="btn">取消</button></div>
    </div>
  </section>

  <div class="mark mark-a"></div>
  <div class="mark mark-b"></div>

  <footer class="taskbar">
    <div class="start"><svg class="win" viewBox="0 0 16 16"><path d="M0 2.300L6.500 1.400V7.500H0zM7.300 1.300L16 0V7.500H7.300zM0 8.300H6.500V14.500L0 13.600zM7.300 8.300H16V16L7.300 14.700z" fill="#fff"/></svg></div>
    <div class="searchbox">
      <span class="cortana"></span><span class="ph">在这里输入你要搜索的内容</span>
      <svg class="mic" viewBox="0 0 12 20"><rect x="3.500" y="0.500" width="5" height="11" rx="2.500" fill="none" stroke="#888"/><path d="M1 8q0 6 5 6t5-6M6 14v4M3 18.500h6" fill="none" stroke="#888"/></svg>
    </div>
    <div class="apps">
      <span class="app-slot"><svg class="tk" viewBox="0 0 20 20"><path d="M6 2.500h8v15H6zM3.500 5H1v10h2.500M16.500 5H19v10h-2.500" fill="none" stroke="#fff" stroke-width="1.200"/></svg></span>
      <span class="app-slot"><svg class="tk big-tk" viewBox="0 0 24 24"><path d="M12 11Q3 14 4 5q1-4 5-3 4 2 3 9zM13 12Q22 9 20 19q-1 4-5 3-4-3-2-10zM11 13Q8 22 3 19q-3-3-1-6 3-3 9 0zM13 11q2-9 7-7 4 3 2 7-3 3-9 0z" fill="#e8e8e8"/></svg></span>
      <span class="app-slot"><svg class="tk big-tk" viewBox="0 0 24 24"><path d="M3 13H19Q19 6 12 6 5 6 4 13 4 21 12 21q5 0 7-4h-4q-1 1-3 1-4 0-5-5zM8 10.500q1-2 4-2t4 2z" fill="#eee" fill-rule="evenodd"/><path d="M20 2q-12 0-17 10" fill="none" stroke="#eee"/></svg></span>
      <span class="app-slot"><svg class="tk" viewBox="0 0 20 20"><path d="M18 3Q7-1 3 7q-3 8 5 11 8 1 9-5 0-5-5-5-4 1-3 4 1 2 3 1" fill="none" stroke="#ccc" stroke-width="1.500"/></svg></span>
      <span class="app-slot"><svg class="tk big-tk" viewBox="0 0 24 24"><path d="M2 12Q3 2 13 2q9 0 9 13H8q1 4 6 4 3 0 6-2v4q-3 2-7 2Q3 23 2 12zM8 10h8q0-4-4-4-3 0-4 4z" fill="#1f82e0" fill-rule="evenodd"/></svg></span>
      <span class="app-slot"><svg class="tk big-tk" viewBox="0 0 24 24"><path d="M3 14H18Q18 7 11 7 4 7 3 14 3 22 11 22q5 0 7-4h-4q-1 1-3 1-4 0-5-5zM7 11.500q1-2 4-2t4 2z" fill="#2a9ae8" fill-rule="evenodd"/><path d="M2 22Q0 14 12 6T22 3q2 3-2 9" fill="none" stroke="#f0c020" stroke-width="1.500"/></svg></span>
      <span class="app-slot run"><svg class="tk big-tk" viewBox="0 0 24 24"><path d="M2 3h8l2 3h10v16H2z" fill="#f8dc80"/><rect x="2" y="8" width="20" height="14" fill="#f8e49a"/><path d="M8 18h8v4H8z" fill="#2a90e0"/><rect x="6" y="15" width="12" height="3" fill="#5ab0f0"/></svg></span>
      <span class="app-slot run"><svg class="tk big-tk" viewBox="0 0 24 24"><rect x="1" y="1" width="22" height="22" rx="3" fill="#f08a20"/><path d="M5 6h12v14H5z" fill="#fff4d8" stroke="#a86018" stroke-width=".5"/><path d="M7 9h7M7 12h7M7 15h5" stroke="#888"/><path d="M20 3l-7 11-2 2 1-3 7-11z" fill="#c83020"/></svg></span>
      <span class="app-slot run"><svg class="tk big-tk" viewBox="0 0 24 24"><path d="M21 3Q8-2 4 7q-4 9 5 14 9 3 12-3 2-6-4-7-5 0-4 4l4 0q-4 5-8-1-2-8 6-9 3 0 6-2z" fill="#1f86e8"/></svg></span>
      <span class="app-slot run"><svg class="tk big-tk" viewBox="0 0 24 24"><circle cx="12" cy="13" r="10" fill="#7ac840"/><circle cx="12" cy="13" r="7" fill="#a0e070"/><path d="M6 12.500h12v1.500H6zM9 11l3-3 3 3zM9 16l3 3 3-3z" fill="#fff"/><path d="M2 22Q0 12 10 5t12-3" fill="none" stroke="#206020"/></svg></span>
      <span class="app-slot run cur"><svg class="tk big-tk" viewBox="0 0 18 18"><use href="#i-logo"/></svg></span>
    </div>
    <span class="tb-link">链接</span>
    <div class="cpu"><span>14%</span><span>CPU使用</span></div>
    <div class="tray">
      <svg class="tr w20" viewBox="0 0 20 16"><path d="M4 11l6-6 6 6" fill="none" stroke="#ddd" stroke-width="1.200"/></svg>
      <svg class="tr w24" viewBox="0 0 24 16"><rect x="9" y="4" width="13" height="9" fill="none" stroke="#ddd"/><rect x="11" y="6" width="8" height="5" fill="#ddd"/><path d="M2 2v4M6 2v4M1 6h6v2l-2 2H3L1 8zM4 10v4h5" fill="none" stroke="#ddd"/></svg>
      <svg class="tr w22" viewBox="0 0 22 16"><path d="M4 14a2 2 0 10.100 0M3 10q4 0 5 4M3 6q7 0 9 8M3 2q11 0 13 12" fill="none" stroke="#ccc" stroke-dasharray="1.500 .6"/></svg>
      <svg class="tr w22" viewBox="0 0 22 16"><path d="M4 6h3l4-4v12l-4-4H4zM13 5q2 3 0 6M15.500 3q3 5 0 10M18 1q4 7 0 14" fill="none" stroke="#ddd"/></svg>
      <svg class="tr w30" viewBox="0 0 24 16"><rect x="1" y="1.500" width="22" height="13" fill="none" stroke="#eee"/><path d="M3 5h18M3 8h18M6 11h12" stroke="#eee" stroke-dasharray="1.500 1"/></svg>
      <span class="tray-zh">中</span>
      <svg class="s-tray" viewBox="0 0 20 20"><rect x="1" y="1" width="18" height="18" rx="3" fill="#ee5a20" transform="rotate(-6 10 10)"/><path d="M14 6H8Q6 6 6 8t2 2h4q2 0 2 2t-2 2H6" fill="none" stroke="#fff" stroke-width="2.400"/></svg>
    </div>
    <div class="clock"><span>22:15</span><span>2018/4/25</span></div>
    <div class="notif">
      <svg class="nt" viewBox="0 0 16 16"><path d="M0 0H16V12H7L4 15V12H0z" fill="#fff"/><path d="M3 3.500h10M3 6h10M3 8.500h10" stroke="#333"/></svg>
      <span class="badge">1</span>
    </div>
  </footer>
</div>
</body>
</html>
```

FILE: styles.css
```css
* { box-sizing: border-box; }
html, body { margin: 0; padding: 0; }
body { width: 1366px; height: 768px; overflow: hidden; font: 12px/16px "Noto Sans CJK SC", "Liberation Sans", sans-serif; color: #111; }
.defs { position: absolute; width: 0; height: 0; }
.screen { position: relative; width: 1366px; height: 768px; overflow: hidden; background: #3a6985; }
.app { width: 1366px; height: 728px; background: #fff; display: flex; flex-direction: column; }
svg { flex: none; display: block; }
b { font: 400 11px/1 "Liberation Mono", monospace; letter-spacing: -.6px; }
i { font-style: normal; }

.ic { width: 16px; height: 16px; }
.ic-txt { font: 8px "Liberation Serif", serif; fill: #226; }
.ic-txt.big { font-size: 10px; fill: #1f56b8; font-weight: 700; }
.ic-sort { font: 700 8.500px "Liberation Sans", sans-serif; }
.ic-sort.blue { fill: #1f56b8; }
.ic-sort.red { fill: #b02020; }
.caret { width: 0; height: 0; border: 3px solid transparent; border-top: 3px solid #222; border-bottom: 0; margin-left: 6px; flex: none; }

/* title */
.titlebar { height: 23px; display: flex; align-items: center; padding-left: 2px; background: #fff; flex: none; }
.logo { width: 18px; height: 18px; margin-right: 3px; }
.title-text { color: #7a7a7a; white-space: nowrap; letter-spacing: .33px; }
.winctl { margin-left: auto; display: flex; gap: 31px; padding-right: 18px; }
.wc { width: 16px; height: 16px; }

/* menu */
.menubar { height: 29px; display: flex; align-items: center; flex: none; }
.menu-list { display: flex; gap: 10.6px; padding-left: 7px; white-space: nowrap; }
.menu-tools { display: flex; gap: 4px; margin-left: 8px; }
.tb-item { display: flex; align-items: center; gap: 3px; white-space: nowrap; }
.bot { gap: 4px; }
.hint { width: 187px; height: 28px; margin-left: 8px; background: #f7f7f7; border-radius: 3px; color: #3f7a00; line-height: 28px; padding-left: 29px; white-space: nowrap; }
.account { width: 222px; height: 28px; margin-left: 4px; background: #f7f7f7; border-radius: 3px; display: flex; align-items: center; padding-left: 2px; }
.phone { margin-left: 4px; font: 13px/16px "Noto Sans", sans-serif; letter-spacing: -.4px; }
.account .caret { margin-left: 6px; }
.beans { margin-left: 8px; }
.bell { margin-left: 11px; }
.more { margin-left: 4px; font: 700 12px/12px "Liberation Sans", sans-serif; height: 24px; }

/* toolbar 1 */
.toolbar1 { height: 26px; margin-top: 2px; display: flex; align-items: center; background: #f5f5f5; flex: none; }
.tb-group { display: flex; align-items: center; height: 26px; }
.g1 { width: 150px; padding-left: 6px; }
.sp { margin-left: 8px; }
.sp2 { margin-left: 7px; }
.g1 .caret { margin-left: 5px; }
.sep-a { margin: 0 7px 0 6px !important; }
.more-in { font: 700 12px/12px "Liberation Sans", sans-serif; margin-left: 18px; align-self: flex-start; margin-top: 3px; }
.g2 { gap: 8px; margin-left: 8px; width: 528px; }
.sigma { width: 16px; text-align: center; font: 700 13px/16px "Liberation Serif", serif; }
.more-in.mid { margin-left: 0; width: 17px; }
.g3 { gap: 8px; margin-left: 0; }
.g3 .mode { margin-right: -3px; }
.mode { width: 61px; height: 24px; border: 1px solid #777; display: flex; align-items: center; padding: 0 3px; color: #999; gap: 3px; background: #f4f4f4; white-space: nowrap; }
.mode-sq { width: 14px; height: 14px; border: 1px solid #ccc; background: linear-gradient(#f4f4f4, #dcdcdc); flex: none; }
.mode .caret { margin-left: 2px; border-top-color: #666; }
.off { color: #999; }
.off .ic { opacity: .95; }
.off .caret { border-top-color: #666; margin-left: 7px; }
.sep { width: 1px; height: 20px; background: #c8c8c8; margin: 0 -3px; flex: none; }
.sep-wide { margin: 0 -1.500px; }
.sep-narrow { margin: 0 -4.500px; }
.sep-narrow2 { margin: 0 -4px; }
.sep-plus { margin: 0 -2px; }
.tight { margin-left: -8px; }
.off.tight .caret { margin-left: 5px; }
.more-in.end { margin-left: 34px; }

/* workspace */
.workspace { height: 620px; margin-top: 4px; display: flex; flex: none; background: #f0f0f0; }
.nav { width: 166px; flex: none; display: flex; flex-direction: column; background: #fff; }
.nav-head { height: 16px; display: flex; justify-content: space-between; align-items: center; margin: 0 1px; line-height: 13px; background: #f0f0f0; border-top: 1px solid #999; }
.nav-pin { display: flex; gap: 7px; padding-right: 3px; }
.mini { width: 11px; height: 12px; }
.nav-btn { height: 22px; width: 165px; margin: 0 0 0 1px; padding: 0; background: #f0f0f0; border: 1px solid #c8c8c8; border-bottom-color: #aaa; border-radius: 0; font: inherit; line-height: 18px; color: #111; flex: none; }
.nav-head + .nav-btn { margin-top: 0; height: 23px; }
.nav-btn + .nav-btn { height: 22px; }
.nav-tools { height: 27px; display: flex; gap: 7px; align-items: center; padding: 2px 0 0 7px; margin-left: 1px; width: 165px; background: #f7f7f7; flex: none; }
.tool-ic { width: 17px; height: 16px; }
.tree-box { width: 162px; height: 488px; margin: 0 0 1px 2px; border: 2px solid #b0b0b0; border-right-color: #c4c4c4; border-bottom-color: #c4c4c4; display: flex; flex-direction: column; background: #fff; flex: none; }
.tree-top { flex: 1; display: flex; min-height: 0; }
.tree { width: 142px; overflow: hidden; padding-top: 1px; }
.row { height: 16px; display: flex; align-items: center; white-space: nowrap; }
.chev { width: 12px; height: 12px; margin-right: 6px; }
.group { padding-left: 4px; background-image: repeating-linear-gradient(to right, #888 0 1px, transparent 1px 2px); background-size: 4px 1px; background-position: 18px 8px; background-repeat: no-repeat; }
.group span { margin-left: 5px; }
.leaf { padding-left: 42px; gap: 4px;
  background-image: repeating-linear-gradient(to bottom, #888 0 1px, transparent 1px 2px), repeating-linear-gradient(to bottom, #888 0 1px, transparent 1px 2px), repeating-linear-gradient(to right, #888 0 1px, transparent 1px 2px);
  background-size: 1px 100%, 1px 100%, 12px 1px; background-position: 11px 0, 30px 0, 30px 8px; background-repeat: no-repeat; }
.leaf > span { margin-bottom: 2px; }
.leaf.end { background-size: 1px 100%, 1px 8px, 12px 1px; }
.on-label { background: #d8d8d8; width: 75px; height: 16px; margin-left: -5px; padding-left: 5px; }
.leaf > .on-label { margin-bottom: 0; }
.on .ic { background: #ececec; }
.vscroll { width: 16px; display: flex; flex-direction: column; align-items: center; background: #fff; }
.sb-arrow { width: 12px; height: 12px; margin: 2px; flex: none; }
.vthumb { width: 15px; height: 340px; background: #c8c8c8; flex: none; }
.vrest { flex: 1; }
.hscroll { height: 16px; display: flex; align-items: center; background: #f0f0f0; flex: none; }
.hthumb { width: 102px; height: 15px; background: #c8c8c8; margin-left: 1px; flex: none; }
.hrest { width: 15px; flex: none; }

/* right */
.right { flex: 1; min-width: 0; display: flex; flex-direction: column; }
.toolbar2 { height: 24px; margin-left: 6px; padding-left: 3px; display: flex; align-items: center; gap: 8px; background: #f7f7f7; }
.toolbar2 .caret { margin-left: 1px; }
.floor-label { margin-left: -2px; }
.floor-combo { width: 62px; height: 22px; background: #fff; display: flex; align-items: center; padding-left: 3px; margin-left: -2px; }
.floor-combo .caret { margin-left: 29px; }
.panes { height: 596px; margin-top: 2px; display: flex; }
.comp { width: 188px; margin-left: 5px; flex: none; padding-top: 7px; display: flex; flex-direction: column; background: #f0f0f0; }
.search { height: 25px; display: flex; align-items: flex-start; flex: none; }
.search-input { width: 156px; height: 24px; margin-left: 2px; border: 1px solid #aaa; background: #fff; color: #888; padding-left: 2px; line-height: 21px; font-size: 12px; }
.search-ic { width: 16px; height: 16px; margin: 4px 0 0 4px; }
.comp-tree { width: 184px; flex: 1; border: 2px solid #a8a8a8; border-bottom-color: #999; background: #fff; padding-top: 1px; }
.ctop { padding-left: 6px; }
.ctop .chev { margin-right: 3px; }
.ctop span { margin-left: 6px; }
.cleaf { padding-left: 41px; background-image: repeating-linear-gradient(to bottom, #888 0 1px, transparent 1px 2px), repeating-linear-gradient(to right, #888 0 1px, transparent 1px 2px); background-size: 1px 100%, 9px 1px; background-position: 30px 0, 30px 8px; background-repeat: no-repeat; }
.cleaf.end { background-size: 1px 8px, 9px 1px; }
.c-on, .c-it { display: flex; align-items: center; width: 51px; height: 16px; padding-left: 3px; gap: 8px; }
.c-on { background: #316ac5; }
.ic-lj { width: 12px; height: 12px; }

.props { flex: 1; min-width: 0; margin-left: 1px; background: #fff; padding-top: 1px; display: flex; flex-direction: column; }
.tabs { height: 21px; border-bottom: 1px solid #d0d0d0; padding-left: 1px; flex: none; }
.tab { display: block; width: 61px; height: 20px; background: #f0f0f0; line-height: 19px; padding-left: 5px; border-right: 1px solid #ccc; }
.prop-box { flex: 1; margin: 4px 0 0 2px; border: 1px solid #b4b4b4; padding: 1px 0 0 1px; background: #fff; }
.grid { border-collapse: separate; border-spacing: 0; table-layout: fixed; background: #fff; }
.grid th { height: 22px; padding: 0; font-weight: 400; background: linear-gradient(#fff, #eee); border-right: 1px solid #ccc; border-bottom: 1px solid #bbb; }
.grid th.hv { background: linear-gradient(#fbdda0, #eec06c); color: #60056a; }
.grid td { height: 19px; padding: 0; line-height: 16px; border-right: 1px solid #c4c4c4; border-bottom: 1px solid #c4c4c4; white-space: nowrap; overflow: hidden; }
.grid td.n { text-align: center; background: linear-gradient(#fff, #eee); font: 12px/16px "Liberation Serif", serif; }
.grid tr.sel td.n { background: #fdd68f; color: #60056a; }
.grid tr.sel td.k { background: #0078d7; color: #fff; }
.grid tr.sel td.v { background: #d9e9f8; }
.c-num { width: 21px; } .c-name { width: 190px; } .c-val { width: 127px; } .c-add { width: 30px; }
.prop-grid { width: 368px; }
.prop-grid th { height: 23px; }
.prop-grid td { padding-top: 2px; }
.prop-grid td.k { padding-left: 20px; }
.prop-grid td.v { padding-left: 3px; }
.link { color: #0000e0; }
.mute { color: #888; }
.prop-grid td.mute { padding-left: 2px; }
.plus { display: inline-block; width: 13px; height: 13px; line-height: 10px; border: 1px solid #aaa; text-align: center; color: #111; margin-right: 4px; vertical-align: -2px; font-family: "Liberation Sans", sans-serif; }

.status { height: 20px; margin-top: 4px; display: flex; gap: 2px; padding-left: 1px; background: #f0f0f0; flex: none; }
.st { height: 19px; background: #f4f4f4; border: 1px solid #d8d8d8; line-height: 17px; padding-left: 1px; white-space: nowrap; }
.s1 { width: 147px; } .s2 { width: 78px; } .s3 { width: 98px; } .s4 { width: 48px; } .s5 { flex: 1; }

/* floats */
.green-ball { position: absolute; left: 1040px; top: -27px; width: 49px; height: 46px; border-radius: 50%; background: #35b34a; border: 2px solid #bfc8c0; color: #fff; font: 700 12px/16px "Noto Sans", sans-serif; text-align: center; padding-top: 26px; box-shadow: 0 2px 4px rgba(0,0,0,.35); }
.sogou { position: absolute; left: 703px; top: 2px; display: flex; align-items: flex-start; }
.s-logo { width: 26px; height: 26px; position: relative; z-index: 1; }
.s-bar { width: 181px; height: 23px; margin: 2px 0 0 -3px; border: 1px solid #a8c4dc; background: #f8fafc; display: flex; align-items: center; padding-left: 7px; gap: 8px; }
.s-zh { color: #1f7ac8; font-weight: 700; font-size: 14px; width: 16px; }
.s-dot { color: #1f7ac8; font: 700 14px/14px "Liberation Sans", sans-serif; width: 12px; margin-left: 4px; }
.s-ic { width: 15px; height: 16px; }

/* dialog */
.dialog { position: absolute; left: 616px; top: 163px; width: 744px; height: 582px; background: #f0f0f0; border: 1px solid #4a90d9; box-shadow: -6px 4px 14px rgba(0,0,0,.2); display: flex; flex-direction: column; }
.dlg-title { height: 25px; background: #fff; display: flex; justify-content: space-between; align-items: center; padding: 0 9px 0 2px; flex: none; color: #222; }
.dlg-x { width: 12px; height: 12px; }
.dlg-body { flex: 1; display: flex; flex-direction: column; }
.dlg-main { display: flex; height: 513px; padding-left: 8px; flex: none; }
.dlg-left { width: 481px; flex: none; }
.type-row { display: flex; align-items: center; height: 20px; margin-top: 18px; padding-left: 16px; }
.type-row label { width: 94px; }
.type-select { width: 145px; height: 20px; background: #e6e6e6; border: 1px solid #aaa; display: flex; align-items: center; justify-content: space-between; padding: 0 3px; }
.sel-ch { width: 10px; height: 10px; }
.fset { border: 1px solid #dcdcdc; border-top-width: 2px; }
.shapes { margin-top: 19px; height: 456px; padding-left: 4px; }
.legend { display: block; width: max-content; height: 16px; margin: -9px 0 0 2px; padding: 0 1px; background: #f0f0f0; }
.shape-grid { display: grid; grid-template-columns: repeat(3, 154px); grid-auto-rows: 144px; gap: 4px; margin-top: 1px; }
.cell { background: #f0f0f0; border: 1px solid; border-color: #fff #a0a0a0 #a0a0a0 #fff; padding: 2px 6px 1px; }
.cell.active { background: #00ffff; border-color: #00ffff; }
.thumb { width: 140px; height: 139px; background: #007f7f; }
.wl { fill: none; stroke: #fff; stroke-width: 3; shape-rendering: crispEdges; }
.cy { fill: none; stroke: #00ffff; stroke-width: 6; shape-rendering: crispEdges; }
.cyf { fill: #00ffff; }
.dt { font: 30px "Liberation Mono", "Noto Sans CJK SC", monospace; fill: #fff; text-anchor: middle; }
.bg { paint-order: stroke; stroke: #007f7f; stroke-width: 8px; }
.lb { font: 42px "Liberation Mono", "Noto Sans CJK SC", monospace; fill: #fff; text-anchor: middle; }
.lb-big { font-size: 48px; }
.lb-s { font-size: 36px; }
.dlg-right { width: 235px; margin-left: 17px; flex: none; padding-top: 9px; }
.param-box { width: 216px; height: 266px; margin-left: 7px; border: 1px solid #aaa; padding: 1px 0 0 1px; background: #fff; }
.p-num { width: 21px; } .p-name { width: 91px; } .p-val { width: 100px; }
.param-grid { width: 212px; }
.param-grid td.k, .param-grid td.v { padding-left: 2px; }
.grid tr.sel td.k b { color: #fff; }
.preview { margin-top: 13px; height: 225px; padding-left: 6px; }
.preview .legend { margin-left: 0; margin-top: -9px; }
.big { width: 210px; height: 210px; margin-top: 2px; background: #007f7f; }
.wl2 { fill: none; stroke: #fff; stroke-width: 3; shape-rendering: crispEdges; }
.cy2 { fill: none; stroke: #00ffff; stroke-width: 7; shape-rendering: crispEdges; }
.bt { font: 38px "Liberation Mono", "Noto Sans CJK SC", monospace; fill: #fff; text-anchor: middle; }
.bl { font: 64px "Liberation Serif", "Noto Sans CJK SC", serif; fill: #e8f8f8; text-anchor: middle; }
.rd { fill: #ff0000; }
.dlg-btns { display: flex; justify-content: flex-end; gap: 15px; margin-top: 12px; padding-right: 14px; }
.btn { width: 72px; height: 23px; padding: 0; background: #e1e1e1; border: 1px solid #adadad; font: inherit; line-height: 18px; color: #111; }
.btn.primary { border: 2px solid #0078d7; }

.mark { position: absolute; border: 7px solid #ff0000; }
.mark-a { left: 528px; top: 156px; width: 117px; height: 51px; }
.mark-b { left: 23px; top: 383px; width: 136px; height: 49px; }

/* taskbar */
.taskbar { position: absolute; left: 0; top: 728px; width: 1366px; height: 40px; background: rgba(0, 0, 0, .82); display: flex; align-items: center; color: #ddd; }
.start { width: 48px; height: 40px; background: #000; display: flex; align-items: center; justify-content: center; }
.win { width: 16px; height: 16px; }
.searchbox { width: 344px; height: 40px; background: #333; display: flex; align-items: center; padding-left: 10px; }
.cortana { width: 20px; height: 20px; border-radius: 50%; border: 3px solid #ddd; flex: none; }
.ph { margin-left: 6px; color: #8a8a8a; font-size: 14px; white-space: nowrap; }
.mic { width: 12px; height: 20px; margin-left: 113px; }
.apps { display: flex; height: 40px; }
.app-slot { width: 49.6px; height: 40px; display: flex; align-items: center; justify-content: center; padding-bottom: 2px; border-bottom: 2px solid transparent; }
.app-slot.run { border-bottom-color: #76b9ed; background-clip: padding-box; }
.app-slot.cur { background-color: rgba(255, 255, 255, .22); }
.tk { width: 20px; height: 20px; }
.big-tk { width: 24px; height: 24px; }
.tb-link { width: 30px; margin-left: 9px; color: #ccc; white-space: nowrap; }
.cpu { width: 52px; margin-left: 14px; display: flex; flex-direction: column; align-items: center; line-height: 18px; color: #ddd; white-space: nowrap; }
.tray { display: flex; align-items: center; margin-left: 15px; }
.tr { height: 16px; flex: none; }
.w20 { width: 20px; } .w24 { width: 24px; margin-left: 2px; } .w22 { width: 22px; } .w30 { width: 26px; margin: 0 2px 0 4px; }
.tray-zh { width: 16px; margin: 0 13px 0 4px; color: #fff; font-size: 14px; }
.s-tray { width: 20px; height: 20px; }
.clock { width: 72px; margin-left: 7px; display: flex; flex-direction: column; align-items: center; line-height: 18px; font-family: "Noto Sans", sans-serif; white-space: nowrap; }
.notif { position: relative; width: 30px; height: 30px; margin-left: 6px; }
.nt { width: 15px; height: 15px; margin: 4px 0 0 7px; }
.badge { position: absolute; left: 12px; top: 14px; width: 16px; height: 16px; border-radius: 50%; background: #222; border: 1px solid #aaa; color: #fff; font: 700 11px/14px "Liberation Sans", sans-serif; text-align: center; }
```
